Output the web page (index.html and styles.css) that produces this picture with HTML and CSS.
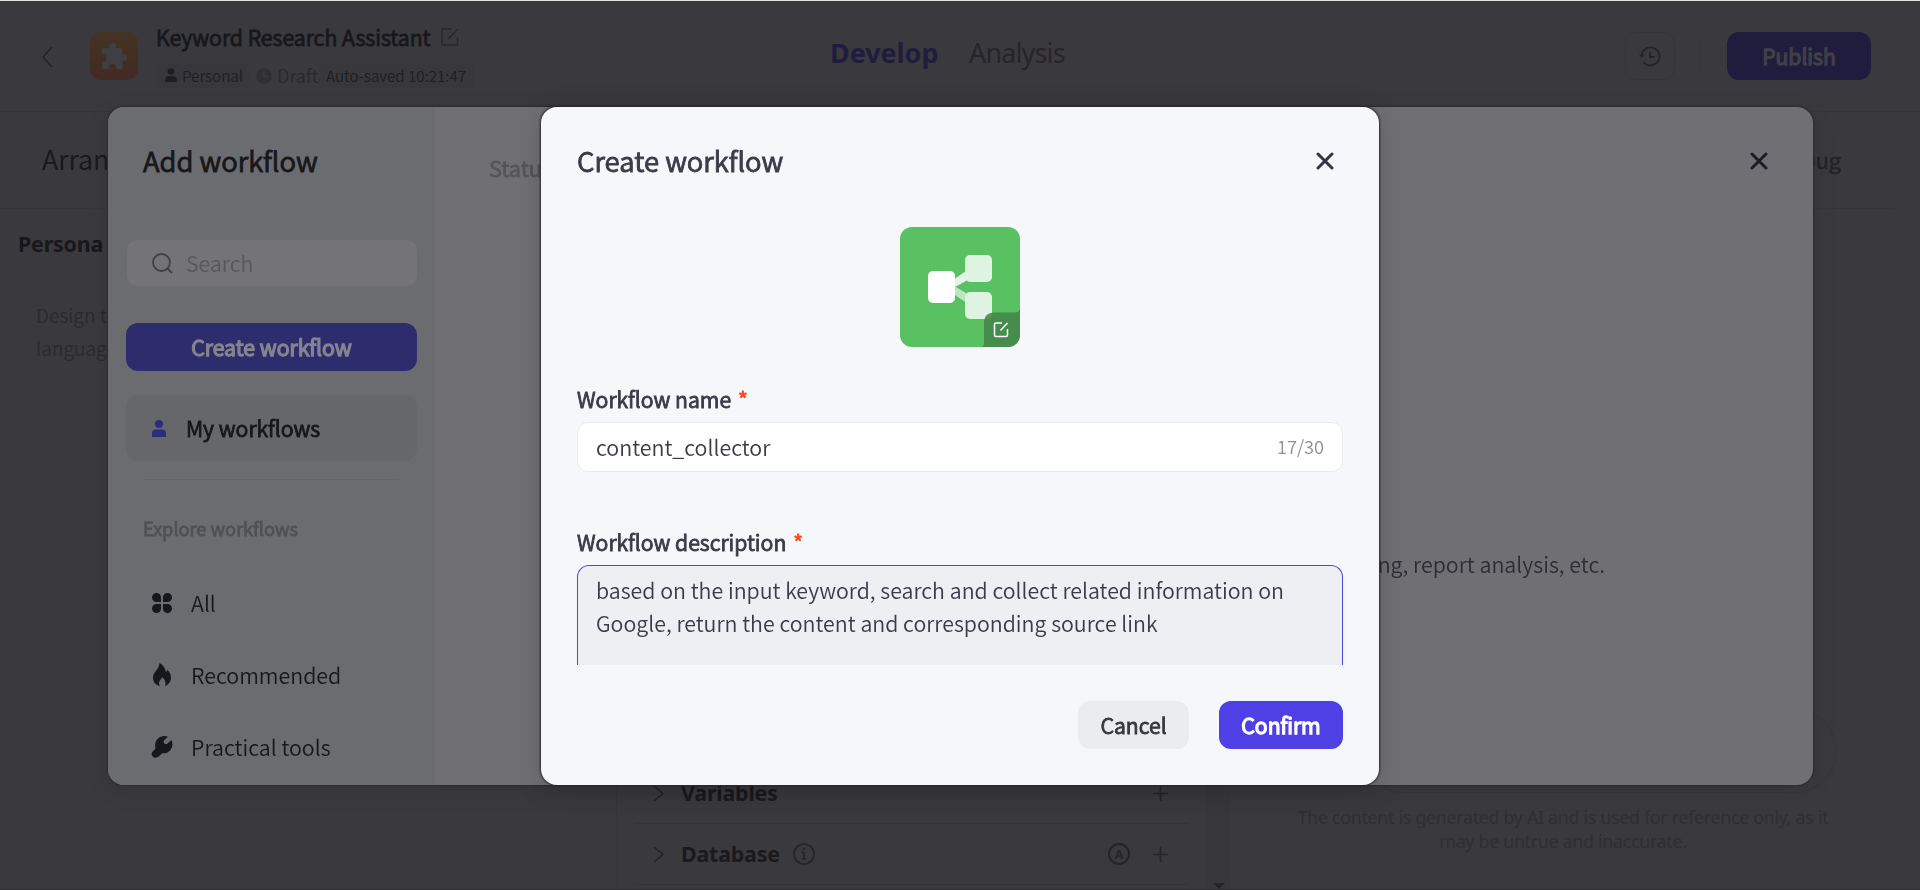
FILE: index.html
```html
<!DOCTYPE html>
<html lang="en">
<head>
<meta charset="utf-8">
<title>Keyword Research Assistant</title>
<link rel="stylesheet" href="styles.css">
</head>
<body>
<div class="page">
  <header class="topbar">
    <svg class="back" width="11" height="22" viewBox="0 0 11 22"><path d="M10 1 1 11l9 10"/></svg>
    <div class="app-icon">
      <svg width="28" height="28" viewBox="0 0 28 28"><path d="M2 7.500q0-1.500 1.500-1.500H9.500C8.600 3 10 .8 12.500.8S16.400 3 15.500 6H21q1.500 0 1.500 1.500v5c2.700-.8 4.700.4 4.700 3s-2 3.700-4.700 3V25.500q0 1.500-1.500 1.500h-4.800c.5-3.200-1-5-3.700-5s-4.200 1.800-3.700 5H3.500Q2 27 2 25.500v-6c3 .6 4.500-1 4.500-3.500S5 12 2 12.500z"/></svg>
    </div>
    <div class="app-meta">
      <div class="app-name"><span class="t-name medium">Keyword Research Assistant</span>
        <svg class="edit" width="18" height="18" viewBox="0 0 18 18"><path d="M10 1H1v16h15.500V9M7 11 17 1"/></svg>
      </div>
      <div class="tags">
        <span class="tag personal"><svg width="12" height="14" viewBox="0 0 12 14"><circle cx="6" cy="3.500" r="3.300"/><path d="M.2 14v-2.500Q.2 8 4 8h4q3.800 0 3.800 3.500V14z"/></svg><span class="t-personal">Personal</span></span>
        <svg class="clock" width="16" height="16" viewBox="0 0 16 16"><circle cx="8" cy="8" r="7.800"/><path d="M8 4v4.500h4"/></svg>
        <span class="draft">Draft</span>
        <span class="tag saved"><span class="t-saved">Auto-saved 10:21:47</span></span>
      </div>
    </div>
    <nav class="tabs"><span class="tab-on">Develop</span><span class="tab-off">Analysis</span></nav>
    <div class="actions">
      <span class="history"><svg width="22" height="22" viewBox="0 0 22 22"><path d="M2.500 11a9 9 0 1 1 2 6M11 7v5h4.500"/><path class="solid" d="M0 9.500h5.500L2.700 13z"/></svg></span>
      <span class="sep"></span>
      <span class="publish strong">Publish</span>
    </div>
  </header>
  <main class="work">
    <section class="col-left">
      <div class="bar">Arrangement</div>
      <h3>Persona</h3>
      <p>Design the persona in natural<br>language</p>
    </section>
    <section class="col-mid">
      <div class="skills">
        <div class="skill"><svg class="chev" width="11" height="17" viewBox="0 0 11 17"><path d="m1 1 9 7.500L1 16"/></svg><b>Variables</b><svg class="plus" width="15" height="15" viewBox="0 0 15 15"><path d="M0 7.500h15M7.500 0v15"/></svg></div>
        <div class="skill"><svg class="chev" width="11" height="17" viewBox="0 0 11 17"><path d="m1 1 9 7.500L1 16"/></svg><b>Database</b><svg class="info" width="22" height="22" viewBox="0 0 22 22"><circle cx="11" cy="11" r="10"/><path d="M9 9.500h2V16M8.500 16h5M11 5v2"/></svg><span class="auto">A</span><svg class="plus" width="15" height="15" viewBox="0 0 15 15"><path d="M0 7.500h15M7.500 0v15"/></svg></div>
      </div>
      <div class="scroll"><svg width="12" height="6" viewBox="0 0 12 6"><path d="M0 0h12L6 6z"/></svg></div>
    </section>
    <section class="col-right">
      <div class="bar debug">Preview and debug</div>
      <div class="composer"></div>
      <p class="note">The content is generated by AI and is used for reference only, as it<br>may be untrue and inaccurate.</p>
    </section>
    <div class="edge"></div>
  </main>
</div>

<div class="modal add">
  <aside class="side">
    <h2 class="medium">Add workflow</h2>
    <div class="search"><svg width="21" height="21" viewBox="0 0 21 21"><circle cx="9.500" cy="9.500" r="8.500"/><path d="m15.500 15.500 4.500 4.500"/></svg><span class="t-search">Search</span></div>
    <div class="create strong">Create workflow</div>
    <div class="mine medium"><svg width="14" height="17" viewBox="0 0 14 17"><circle cx="7" cy="4" r="4"/><path d="M0 17v-3.500Q0 9.500 4 9.500h6q4 0 4 4V17z"/></svg><span>My workflows</span></div>
    <div class="rule"></div>
    <div class="explore medium">Explore workflows</div>
    <ul>
      <li><svg width="22" height="24" viewBox="0 0 22 24"><path d="M10 11H5.500A4.500 4.500 0 1 1 10 6.500zM12 11V6.500A4.500 4.500 0 1 1 16.500 11zM10 13v4.500A4.500 4.500 0 1 1 5.500 13zM12 13h4.500a4.500 4.500 0 1 1-4.500 4.500z"/></svg><span>All</span></li>
      <li><svg width="22" height="24" viewBox="0 0 22 24"><path d="M8.500 0c4 2 6 5.500 6.300 9.200L16.500 7c2.300 2.300 3.500 4.500 3.500 7.500 0 4.200-2.500 7.200-6 8.500 1.400-3.200 0-6.500-3-9-.2 2-3 3.500-3 6 0 1 .3 2.200.8 3C4.500 21.800 2 19 2 14.500 2 9 8 7 8.500 0z"/></svg><span>Recommended</span></li>
      <li><svg width="22" height="24" viewBox="0 0 22 24"><path d="M17 1.700 13.300 5c-1.800 2.500 1 5.500 3.500 3.200L20.500 5c3.200 7-2.300 14.300-9.300 13.200L8 21.200c-4.500 4.200-10-1.700-6-5l2.500-2.500C2.500 5 9.500-1 17 1.700z"/></svg><span>Practical tools</span></li>
    </ul>
  </aside>
  <section class="content">
    <div class="content-head"><span class="status medium">Status</span><svg class="x" width="18" height="18" viewBox="0 0 18 18"><path d="m2 2 14 14M16 2 2 16"/></svg></div>
    <p class="empty">processing, report analysis, etc.</p>
  </section>
</div>

<div class="modal dialog">
  <div class="dialog-head"><h2 class="medium">Create workflow</h2><svg class="x" width="18" height="18" viewBox="0 0 18 18"><path d="m2 2 14 14M16 2 2 16"/></svg></div>
  <svg class="cover" width="120" height="120" viewBox="0 0 120 120">
    <clipPath id="r"><rect width="120" height="120" rx="12"/></clipPath>
    <g clip-path="url(#r)">
      <rect width="120" height="120" fill="#5ac163"/>
      <path d="M55 51.500 66 44v10L55 60z" fill="#e3f4e4"/><path d="M55 59.500 66 66v9.500L55 68z" fill="#bde6c0"/>
      <rect x="28" y="44" width="27" height="32" rx="5" fill="#fff"/>
      <rect x="65" y="28" width="27" height="27" rx="5" fill="#def3e0"/>
      <rect x="65" y="65" width="27" height="27" rx="5" fill="#def3e0"/>
      <path d="M82 120q2-1 2-4V96q0-10.500 10.500-10.500H115q4 0 5-3.500v38z" fill="#428249" fill-opacity=".84"/>
      <path d="M102 96h-6q-1.500 0-1.500 1.500v10.500q0 1.500 1.500 1.500h10q1.500 0 1.500-1.500v-6M100.500 103.500l7-7.500" fill="none" stroke="#fff" stroke-width="1.500"/>
    </g>
  </svg>
  <div class="label medium">Workflow name<i>*</i></div>
  <div class="input"><span class="t-input">content_collector</span><span class="count">17/30</span></div>
  <div class="label medium second">Workflow description<i>*</i></div>
  <div class="area">based on the input keyword, search and collect related information on<br>Google, return the content and corresponding source link</div>
  <div class="buttons"><span class="cancel medium">Cancel</span><span class="confirm strong">Confirm</span></div>
</div>
</body>
</html>
```
FILE: styles.css
```css
* { box-sizing: border-box; }
body { margin: 0; width: 1920px; height: 890px; overflow: hidden; background: #3a393d; font-family: "Noto Sans CJK SC", "Noto Sans", sans-serif; font-weight: 350; color: #17171c; white-space: nowrap; }
h2, h3, p, ul { margin: 0; padding: 0; font-weight: 350; list-style: none; }
svg { display: block; flex: none; fill: none; }
.medium { -webkit-text-stroke: .9px currentColor; }
.strong { -webkit-text-stroke: 1.4px currentColor; }
.page { height: 890px; border-top: 1px solid #dfe3df; border-bottom: 1px solid #322f34; display: flex; flex-direction: column; }
.topbar { height: 111px; flex: none; border-bottom: 1px solid #363539; display: flex; align-items: flex-start; padding: 31px 49px 0 42px; }
.back { margin-top: 14px; stroke: #242328; stroke-width: 1.6; }
.app-icon { width: 48px; height: 48px; margin-left: 37px; border-radius: 11px; background: linear-gradient(#433424, #432a23); display: flex; align-items: center; justify-content: center; }
.app-icon svg { fill: #3f3e42; }
.app-meta { margin: -11px 0 0 18px; width: 674px; }
.app-name { display: flex; align-items: center; height: 32px; font-size: 21.35px; line-height: 32px; }
.edit { margin-left: 11px; stroke: #29282c; stroke-width: 1.5; }
.tags { display: flex; align-items: center; height: 24px; margin-top: 11px; font-size: 15.15px; line-height: 22px; color: #1f1e22; }
.tag { display: flex; align-items: center; height: 24px; padding-bottom: 2px; background: #38373b; border-radius: 6px; }
.personal { width: 93px; padding-left: 9px; gap: 5px; }
.personal svg { fill: #1f1e22; margin-bottom: 1px; }
.clock { margin-left: 7px; fill: #303034; stroke: #3a393d; stroke-width: 1.4; }
.clock circle { stroke: none; }
.draft { margin-left: 5px; width: 41px; padding-bottom: 2px; font-size: 18.2px; color: #29292d; }
.saved { width: 156px; padding-left: 8px; }
.tabs { display: flex; gap: 31px; margin-top: 1px; font: 26.9px/40px "Noto Sans", sans-serif; }
.tab-on { color: #1f1c3d; font-weight: 700; width: 108px; }
.tab-off { color: #262529; letter-spacing: -.8px; }
.actions { margin-left: auto; display: flex; align-items: center; }
.history { width: 50px; height: 48px; border: 1px solid #363539; border-radius: 11px; display: flex; align-items: center; justify-content: center; }
.history svg { stroke: #242327; stroke-width: 1.8; }
.history .solid { fill: #242327; stroke: none; }
.sep { width: 1px; height: 24px; background: #37363a; margin: 0 26px 0 25px; }
.publish { width: 144px; height: 48px; border-radius: 12px; background: #1f1c3d; color: #403f48; font-size: 21.3px; line-height: 48px; text-align: center; }
.work { flex: 1; min-height: 0; display: grid; grid-template-columns: 616px 615px 664px 25px; }
.work section { overflow: hidden; min-width: 0; }
.bar { height: 97px; border-bottom: 1px solid #363539; }
.col-left .bar { padding: 27px 0 0 42px; font-size: 27px; line-height: 40px; }
.col-left h3 { padding: 20px 0 0 18px; font: 700 21.4px/30px "Noto Sans", sans-serif; letter-spacing: -.2px; }
.col-left p { padding: 39px 0 0 36px; font-size: 19px; line-height: 33px; color: #2a2a2e; }
.col-mid { display: flex; align-items: flex-end; border-left: 1px solid #363539; }
.skills { flex: 1; padding: 0 18px 4px; }
.skill { height: 61px; display: flex; align-items: center; padding: 0 20px 0 18px; border-bottom: 1px solid #353438; }
.skill b { margin-left: 17px; font: 700 21.4px/30px "Noto Sans", sans-serif; letter-spacing: -.2px; color: #1a191d; }
.chev, .plus, .info { stroke: #252428; stroke-width: 1.6; }
.plus { margin-left: auto; }
.info { margin-left: 13px; }
.auto { margin-left: auto; width: 22px; height: 22px; border: 2px solid #252428; border-radius: 50%; font: 700 13px/18px "Noto Sans", sans-serif; text-align: center; color: #252428; }
.auto + .plus { margin-left: 23px; }
.scroll { width: 25px; height: 100%; background: #38373b; display: flex; align-items: flex-end; justify-content: center; }
.scroll svg { fill: #242327; }
.debug { padding: 30px 54px 0 0; text-align: right; font-size: 21.8px; line-height: 36px; color: #232226; -webkit-text-stroke: .5px currentColor; }
.composer { height: 84px; width: 477px; margin: 500px 0 0 129px; border: 1px solid #363539; border-radius: 42px; }
.note { width: 560px; margin: 12px 0 0 52px; text-align: center; font: 17.75px/24px "Noto Sans", sans-serif; letter-spacing: -.27px; color: #2f2e32; }
.edge { background: #39393d; }

/* overlay windows */
.modal { position: fixed; top: 107px; height: 678px; border-radius: 16px; overflow: hidden; }
.add { left: 108px; width: 1705px; display: flex; background: #706f74; box-shadow: 0 0 2px 1px #2c2b30, 0 6px 24px rgba(0,0,0,.1); }
.side { width: 327px; background: #6b6c70; padding: 33px 18px 0; }
.modal h2 { font-size: 27.5px; line-height: 40px; }
.side h2 { padding-left: 17px; }
.search { height: 46px; margin: 60px 0 0 1px; width: 290px; border-radius: 10px; background: #747476; display: flex; align-items: center; padding-left: 25px; gap: 13px; font-size: 21.3px; color: #58585c; }
.search span { padding-bottom: 1px; }
.search svg { stroke: #414146; stroke-width: 1.8; }
.create { margin-top: 37px; height: 48px; border-radius: 12px; background: #2d2c6d; color: #84848e; font-size: 21.4px; line-height: 48px; text-align: center; }
.mine { margin-top: 24px; height: 66px; border-radius: 12px; background: #66676b; display: flex; align-items: center; padding-left: 26px; gap: 20px; font-size: 21.3px; }
.mine svg { fill: #2d2c78; }
.mine span, .side li span { padding-bottom: 2px; }
.rule { height: 1px; background: #64656a; margin: 18px; }
.explore { padding-left: 17px; margin-top: 33px; font-size: 18.4px; line-height: 30px; color: #515155; }
.side ul { margin-top: 24px; padding-left: 25px; }
.side li { height: 72px; display: flex; align-items: center; gap: 18px; font-size: 21.4px; }
.side li svg { fill: #17161c; }
.content { flex: 1; }
.content-head { display: flex; justify-content: space-between; padding: 45px 45px 0 54px; height: 90px; font-size: 21.8px; line-height: 34px; color: #565559; }
.content-head .status { margin-top: -1px; }
.x { stroke: #1e1d25; stroke-width: 3; stroke-linecap: round; }
.empty { padding: 349px 208px 0 0; text-align: right; font-size: 21.4px; line-height: 36px; color: #2e2d33; }
.dialog { left: 541px; width: 838px; background: #f6f7fb; color: #3b3b49; padding: 33px 36px 36px; display: flex; flex-direction: column; box-shadow: 0 0 2px 1px #2c2b30, 0 4px 28px rgba(0,0,0,.16); }
.dialog-head { display: flex; justify-content: space-between; padding-right: 9px; }
.dialog .x { margin-top: 12px; stroke: #34333f; }
.cover { margin: 47px auto 0; }
.label { margin-top: 37px; height: 30px; line-height: 30px; font-size: 21.3px; }
.label i { color: #ff441e; font-style: normal; margin-left: 7px; }
.input { margin-top: 8px; height: 50px; border: 1px solid #e9eaee; border-radius: 11px; background: #fff; display: flex; align-items: center; justify-content: space-between; padding: 0 18px 2px; font-size: 21.4px; }
.count { font-size: 18.2px; color: #8f8f96; }
.second { margin-top: 55px; }
.area { margin-top: 8px; height: 100px; border: 1px solid #4f47db; border-bottom: 0; border-radius: 12px 12px 0 0; background: #eeeff3; padding: 7px 18px; font-size: 21.35px; line-height: 33px; }
.buttons { margin-top: auto; display: flex; justify-content: flex-end; gap: 30px; font-size: 21.3px; line-height: 48px; text-align: center; }
.cancel { width: 111px; border-radius: 12px; background: #ebecf0; color: #37373d; }
.confirm { width: 124px; border-radius: 12px; background: #4e40e5; color: #fff; }
.add .x { margin-top: 0; }
```
